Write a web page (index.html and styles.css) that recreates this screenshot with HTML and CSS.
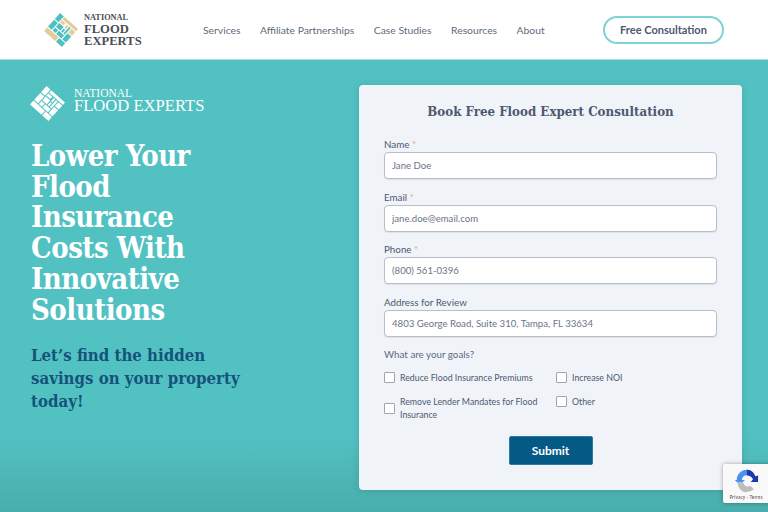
FILE: index.html
```html
<!DOCTYPE html>
<html lang="en">
<head>
    <meta charset="UTF-8">
    <meta name="viewport" content="width=device-width, initial-scale=1.0">
    <title>National Flood Experts</title>
    <link rel="stylesheet" href="styles.css">
</head>
<body>

<header class="site-header">
    <a class="brand" href="#">
        <svg class="brand-mark" viewBox="0 0 36 36">
            <g transform="rotate(42 18 18)">
                <path class="tan" d="M6 25h15v5H6zM12 6h18v3H12zM25 10h5v5h-5zM12 10h5v3h-5zM19 10h2v4h-2z"/>
                <path class="aqua" d="M6 6h5v8H6zM6 15h5v9H6zM12 14h6v5h-6zM22 10h2v9h-2zM19 15h2v4h-2zM12 20h4v4h-4zM17 20h7v4h-7zM25 16h5v8h-5zM22 25h8v5h-8z"/>
            </g>
        </svg>
        <span class="brand-text">
            <span class="brand-small">NATIONAL</span>
            <span>FLOOD</span>
            <span>EXPERTS</span>
        </span>
    </a>
    <nav class="main-nav">
        <a href="#">Services</a>
        <a href="#">Affiliate Partnerships</a>
        <a href="#">Case Studies</a>
        <a href="#">Resources</a>
        <a href="#">About</a>
    </nav>
    <a class="cta" href="#">Free Consultation</a>
</header>

<main class="hero">
    <section class="hero-left">
        <a class="hero-brand" href="#">
            <svg class="hero-mark" viewBox="0 0 36 36">
                <g transform="rotate(42 18 18)" fill="#fff">
                    <path d="M6 25h15v5H6zM12 6h18v3H12zM25 10h5v5h-5zM12 10h5v3h-5zM19 10h2v4h-2z"/>
                    <path d="M6 6h5v8H6zM6 15h5v9H6zM12 14h6v5h-6zM22 10h2v9h-2zM19 15h2v4h-2zM12 20h4v4h-4zM17 20h7v4h-7zM25 16h5v8h-5zM22 25h8v5h-8z"/>
                </g>
            </svg>
            <span class="hero-brand-text">
                <span class="hero-brand-small">NATIONAL</span>
                <span>FLOOD EXPERTS</span>
            </span>
        </a>
        <h1>Lower Your Flood Insurance Costs With Innovative Solutions</h1>
        <p class="subhead">Let’s find the hidden savings on your property today!</p>
    </section>

    <form class="lead-form">
        <h2>Book Free Flood Expert Consultation</h2>

        <label for="name">Name <span class="req">*</span></label>
        <input type="text" id="name" placeholder="Jane Doe">

        <label for="email">Email <span class="req">*</span></label>
        <input type="text" id="email" placeholder="jane.doe@email.com">

        <label for="phone">Phone <span class="req">*</span></label>
        <input type="text" id="phone" placeholder="(800) 561-0396">

        <label for="address">Address for Review</label>
        <input type="text" id="address" placeholder="4803 George Road, Suite 310, Tampa, FL 33634">

        <p class="goals-title">What are your goals?</p>
        <div class="goals">
            <label class="check"><input type="checkbox"><span>Reduce Flood Insurance Premiums</span></label>
            <label class="check"><input type="checkbox"><span>Increase NOI</span></label>
            <label class="check"><input type="checkbox"><span>Remove Lender Mandates for Flood Insurance</span></label>
            <label class="check check-top"><input type="checkbox"><span>Other</span></label>
        </div>

        <button type="button" class="submit">Submit</button>
    </form>
</main>

<!-- recaptcha badge -->
<div class="recaptcha">
    <svg class="recaptcha-icon" viewBox="0 0 28 28">
        <path fill="#4a90f5" d="M3 13C3 7 8 2 14 2c2 0 4 .6 5 1.500L15 8c-3-1-6 1-6.500 5H12l-6 5-5-5z" transform="translate(1 0)"/>
        <path fill="#1c3aa9" d="M15 2c4 0 8 3 9 7l3-1v7h-8l2.500-2.500C21 10 18 8 15 8z"/>
        <path fill="#bdbdbd" d="M5 15h6c.5 4 4 6 8 4.500l3.500 3.500C20 25 17 26 14 26 9 26 5 21 5 15z"/>
    </svg>
    <span class="recaptcha-text">Privacy - Terms</span>
</div>

</body>
</html>
```

FILE: styles.css
```css
* {
    box-sizing: border-box;
}

body {
    margin: 0;
    height: 512px;
    overflow: hidden;
    font-family: Lato, "Open Sans", sans-serif;
    background: linear-gradient(to bottom, #52c1c2 85%, #49aeab);
}

a {
    text-decoration: none;
    color: inherit;
}

/* Header */
.site-header {
    height: 60px;
    background-color: #fff;
    border-bottom: 1px solid #a8dfe0;
    display: flex;
    align-items: center;
    padding: 0 44px 0 43px;
}

.brand {
    display: flex;
    align-items: center;
    gap: 5px;
    width: 160px;
}

.brand-mark {
    width: 36px;
    height: 36px;
}

.tan {
    fill: #e3cc96;
}

.aqua {
    fill: #4fc0c2;
}

.brand-text {
    display: flex;
    flex-direction: column;
    font-family: "Liberation Serif", serif;
    font-weight: bold;
    font-size: 12.600px;
    line-height: 12px;
    color: #4b4d55;
}

.brand-small {
    font-size: 8.300px;
    line-height: 11px;
}

.main-nav {
    display: flex;
    gap: 19.500px;
    font-size: 10.350px;
    color: #5f6a7c;
}

.cta {
    margin-left: auto;
    width: 121px;
    height: 28px;
    border: 2px solid #7cd3d3;
    border-radius: 14px;
    display: flex;
    align-items: center;
    justify-content: center;
    font-size: 11px;
    font-weight: bold;
    color: #4d5870;
}

/* Hero */
.hero {
    display: flex;
    padding: 25px 26px 0 31px;
    justify-content: space-between;
}

.hero-left {
    width: 215px;
}

.hero-brand {
    display: flex;
    align-items: center;
    gap: 8px;
    margin-left: -2px;
    color: #fff;
}

.hero-mark {
    width: 37px;
    height: 37px;
}

.hero-brand-text {
    display: flex;
    flex-direction: column;
    margin-bottom: 6px;
    font-family: "Liberation Serif", serif;
    font-size: 16.600px;
    line-height: 14px;
    white-space: nowrap;
}

.hero-brand-small {
    font-size: 11.500px;
    line-height: 11px;
}

h1 {
    margin: 19px 0 0;
    font-family: "DejaVu Serif", serif;
    font-stretch: condensed;
    font-size: 29px;
    letter-spacing: -0.5px;
    line-height: 30.700px;
    color: #fff;
}

.subhead {
    margin: 19px -12px 0 0;
    font-family: "DejaVu Serif", serif;
    font-stretch: condensed;
    font-weight: bold;
    font-size: 16.700px;
    line-height: 23px;
    color: #14537a;
}

/* Form */
.lead-form {
    width: 383px;
    height: 405px;
    background-color: #f0f4f9;
    border-radius: 4px;
    padding: 17px 25px 0;
    box-shadow: 0 1px 8px rgba(0, 0, 0, 0.12);
    display: flex;
    flex-direction: column;
    font-size: 9.800px;
    color: #4d5870;
}

.lead-form h2 {
    margin: 0 0 15px;
    text-align: center;
    font-family: "DejaVu Serif", serif;
    font-stretch: condensed;
    font-size: 13.200px;
    line-height: 20px;
    color: #4d5870;
}

.lead-form > label {
    line-height: 14px;
    margin-bottom: 1px;
}

.req {
    color: #f0a27d;
}

.lead-form > input {
    height: 27px;
    margin-bottom: 10.500px;
    padding: 0 7px;
    background-color: #fff;
    border: 1px solid #b7bec9;
    border-radius: 4px;
    box-shadow: 0 1px 1px rgba(0, 0, 0, 0.08);
    font-family: inherit;
    font-size: 9.600px;
}

.lead-form > input::placeholder {
    color: #6b7484;
    opacity: 1;
}

.goals-title {
    margin: 0 0 10px;
    line-height: 14px;
    color: #5f6a7c;
}

.goals {
    display: grid;
    grid-template-columns: 172px 1fr;
    row-gap: 11px;
    align-items: center;
}

.check {
    display: flex;
    align-items: center;
    gap: 5px;
    font-size: 8.800px;
    line-height: 13px;
    color: #4d5870;
}

.check-top {
    align-self: start;
}

.check input {
    appearance: none;
    flex: none;
    width: 11px;
    height: 11px;
    margin: 0;
    background-color: #fff;
    border: 1px solid #9ea5b0;
    border-radius: 1px;
}

.submit {
    align-self: center;
    width: 84px;
    height: 29px;
    margin-top: 15px;
    background-color: #055a85;
    color: #fff;
    border: 1px solid #2c7aa0;
    border-radius: 2px;
    font-family: inherit;
    font-size: 12px;
    font-weight: bold;
}

/* reCAPTCHA badge, sits over the page corner */
.recaptcha {
    position: fixed;
    left: 723px;
    top: 464px;
    width: 46px;
    height: 39px;
    background-color: #f9f9f9;
    box-shadow: 0 0 4px rgba(0, 0, 0, 0.35);
    border-radius: 2px 0 0 2px;
    display: flex;
    flex-direction: column;
    align-items: center;
}

.recaptcha-icon {
    width: 26px;
    height: 26px;
    margin-top: 4px;
}

.recaptcha-text {
    font-size: 5px;
    line-height: 7px;
    color: #555;
    white-space: nowrap;
}
```
